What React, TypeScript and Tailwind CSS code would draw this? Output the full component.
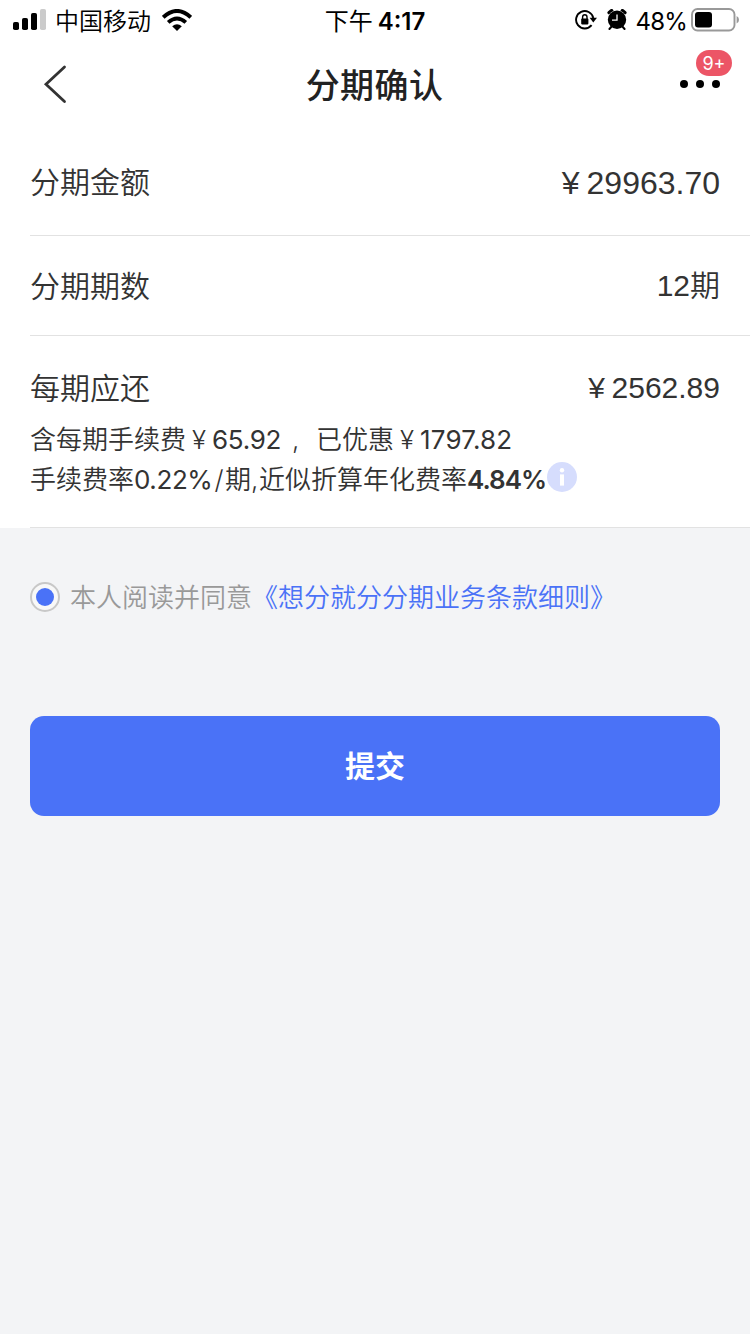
import type { ReactNode } from 'react';

const CJK = "font-['Liberation_Sans','Noto_Sans_CJK_SC',sans-serif]";
const UI = "font-['Inter','Noto_Sans_CJK_SC',sans-serif]";

function Yen({ className = '' }: { className?: string }) {
  return <span className={`inline-block w-[1em] text-center ${className}`}>¥</span>;
}

function SignalIcon() {
  return (
    <svg width="34" height="22" viewBox="0 0 34 22" className="shrink-0">
      <rect x="0" y="13" width="6" height="8" rx="1.8" />
      <rect x="9" y="9" width="6" height="12" rx="1.8" />
      <rect x="18" y="4" width="6" height="17" rx="1.8" />
      <rect x="27" y="0" width="6" height="21" rx="1.8" fill="#cbcbcb" />
    </svg>
  );
}

function WifiIcon() {
  return (
    <svg width="30" height="22" viewBox="0 0 30 22" className="shrink-0">
      <path d="M1.2 8.3 Q15 -4.3 28.8 8.3" fill="none" stroke="#000" strokeWidth="4" />
      <path d="M6.2 13.4 Q15 5.4 23.8 13.4" fill="none" stroke="#000" strokeWidth="3.8" />
      <path d="M15 22 L10.2 17.3 Q15 13.3 19.8 17.3 Z" />
    </svg>
  );
}

function RotationLockIcon() {
  return (
    <svg width="22" height="22" viewBox="0 0 22 22" className="shrink-0">
      <path d="M16.6 16.2 A8.7 8.7 0 1 1 18.3 9" fill="none" stroke="#000" strokeWidth="1.9" />
      <path d="M14.6 8.8 L22 8.8 L18.3 13.6 Z" />
      <rect x="6.2" y="9.6" width="7.2" height="5.8" rx="0.8" />
      <path d="M7.6 10 V8 a2.2 2.2 0 0 1 4.4 0 V10" fill="none" stroke="#000" strokeWidth="1.4" />
    </svg>
  );
}

function AlarmIcon() {
  return (
    <svg width="20" height="22" viewBox="0 0 20 22" className="shrink-0">
      <path d="M2.2 3.6 L4.6 1.8" stroke="#000" strokeWidth="3.6" strokeLinecap="round" />
      <path d="M17.8 3.6 L15.4 1.8" stroke="#000" strokeWidth="3.6" strokeLinecap="round" />
      <circle cx="10" cy="10.8" r="9.6" fill="#fff" />
      <circle cx="10" cy="10.8" r="9.2" />
      <path d="M4.2 18 L2.4 20 M15.8 18 L17.6 20" stroke="#000" strokeWidth="2" strokeLinecap="round" />
      <path d="M10 5.4 V11.2 H5" fill="none" stroke="#fff" strokeWidth="1.3" />
    </svg>
  );
}

function BatteryIcon() {
  return (
    <svg width="48" height="24" viewBox="0 0 48 24" className="shrink-0">
      <rect x="1" y="1" width="42.5" height="21.5" rx="5.5" fill="none" stroke="#999" strokeWidth="1.9" />
      <rect x="4" y="4" width="17" height="15.5" rx="3" />
      <path d="M45.6 8 Q48 9 48 11.8 Q48 14.6 45.6 15.6 Z" fill="#999" />
    </svg>
  );
}

function InfoIcon() {
  return (
    <svg width="30" height="30" viewBox="0 0 30 30" className="shrink-0">
      <circle cx="15" cy="15" r="15" fill="#d6ddfd" />
      <circle cx="15" cy="8.2" r="2.2" fill="#fff" />
      <rect x="13" y="12.4" width="4" height="11.2" fill="#fff" />
    </svg>
  );
}

function StatusBar() {
  return (
    <div className={`grid h-10 grid-cols-[1fr_auto_1fr] items-center text-2xl leading-9 text-black ${UI}`}>
      <div className="flex items-center pl-[13px]">
        <SignalIcon />
        <span className="ml-2 w-[96px] whitespace-nowrap pt-1 font-[350]">中国移动</span>
        <span className="ml-[11px]"><WifiIcon /></span>
      </div>
      <div className="flex gap-[5px] pt-1">
        <span>下午</span>
        <span className="font-semibold">4:17</span>
      </div>
      <div className="flex items-center justify-end pr-[11px]">
        <RotationLockIcon />
        <span className="ml-[10px]"><AlarmIcon /></span>
        <span className="ml-2 pt-1 tracking-[-0.8px]">48%</span>
        <span className="ml-1"><BatteryIcon /></span>
      </div>
    </div>
  );
}

function NavBar() {
  return (
    <header className={`grid h-[88px] grid-cols-[1fr_auto_1fr] items-center pl-[43px] pr-[30px] ${UI}`}>
      <svg width="40" height="40" viewBox="0 0 40 40">
        <path d="M21.5 3 L3 20.3 L21.5 37.5" fill="none" stroke="#333" strokeWidth="2.8" strokeLinecap="round" />
      </svg>
      <h1 className="mr-[14px] pt-1 text-[34px] font-medium leading-none tracking-[0.4px] text-[#222]">分期确认</h1>
      <div className="relative flex w-10 justify-between justify-self-end">
        <i className="size-2 rounded-full bg-black" />
        <i className="size-2 rounded-full bg-black" />
        <i className="size-2 rounded-full bg-black" />
        <span className="absolute -top-[30px] left-4 flex h-[26px] w-9 items-center justify-center rounded-full bg-[#ec5566] pt-px text-lg leading-none text-white">
          9+
        </span>
      </div>
    </header>
  );
}

function Row({ label, children }: { label: string; children: ReactNode }) {
  return (
    <div className="flex items-center justify-between">
      <span className="pt-0.5 font-[350]">{label}</span>
      {children}
    </div>
  );
}

export default function App() {
  return (
    <div className="h-[1334px] w-[750px] overflow-hidden bg-[#f3f4f6]">
      <div className="bg-white">
        <StatusBar />
        <NavBar />
        <main className={`pl-[30px] text-[30px] leading-10 text-[#333] ${CJK}`}>
          <div className="flex h-[108px] flex-col justify-center border-b border-[#e2e2e2] pr-[30px]">
            <Row label="分期金额">
              <span className="pt-0.5 text-[32px]"><Yen />29963.70</span>
            </Row>
          </div>
          <div className="flex h-[100px] flex-col justify-center border-b border-[#e2e2e2] pr-[30px]">
            <Row label="分期期数">
              <span className="font-[350]">12期</span>
            </Row>
          </div>
          <div className="h-48 border-b border-[#e2e2e2] pr-[30px] pt-[31px]">
            <Row label="每期应还">
              <span><Yen />2562.89</span>
            </Row>
            <div className={`mt-[11px] whitespace-nowrap text-[26px] font-[350] ${UI}`}>
              <p className="flex">
                <span>含每期手续费</span>
                <Yen />
                <span className="w-[69px] font-[380] tracking-[-0.3px]">65.92</span>
                <span className="w-[35px] pl-[11px]">,</span>
                <span>已优惠</span>
                <Yen />
                <span className="font-[380] tracking-[0.2px]">1797.82</span>
              </p>
              <p className="flex items-center">
                <span>手续费率</span>
                <span className="w-[79px] font-[380] tracking-[-0.4px]">0.22%</span>
                <span className="w-3 text-center">/</span>
                <span>期</span>
                <span className="w-2">,</span>
                <span>近似折算年化费率</span>
                <strong className="w-[80px] font-semibold tracking-[-1px]">4.84%</strong>
                <span className="-mt-1.5"><InfoIcon /></span>
              </p>
            </div>
          </div>
        </main>
      </div>

      <section className={`px-[30px] pt-[54px] ${UI}`}>
        <label className="flex items-center whitespace-nowrap text-[26px] font-[350] leading-[28px] text-[#999]">
          <i className="mr-[10px] flex size-[30px] items-center justify-center rounded-full border-2 border-[#c8c8c8] bg-[#f8f8f8]">
            <b className="size-[18px] rounded-full bg-[#4a72f7]" />
          </i>
          <span className="pt-0.5">本人阅读并同意</span>
          <a className="pt-0.5 text-[#4a72f7]">《想分就分分期业务条款细则》</a>
        </label>
        <button className="mt-[104px] flex h-[100px] w-full items-center justify-center rounded-[14px] bg-[#4a72f7] text-[30px] font-semibold text-white">
          提交
        </button>
      </section>
    </div>
  );
}
